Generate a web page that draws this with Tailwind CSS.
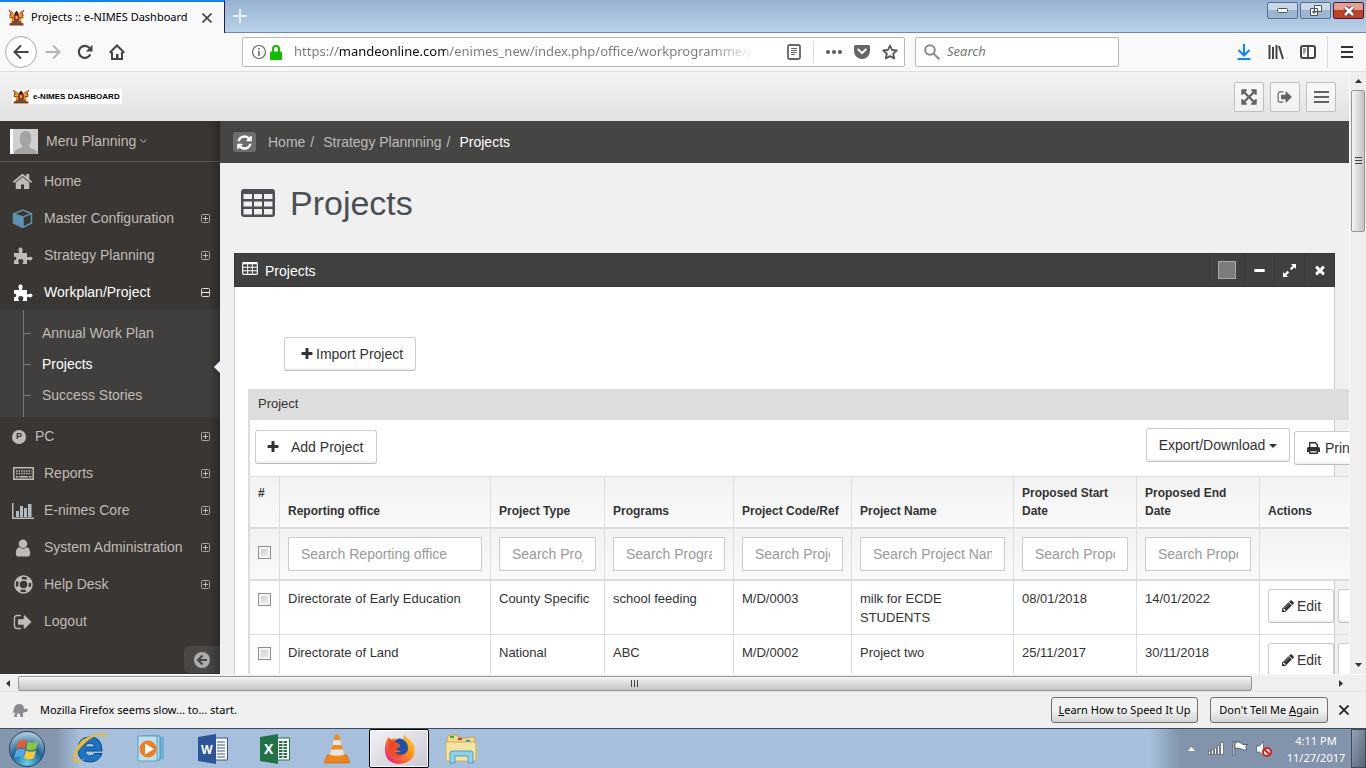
<!DOCTYPE html>
<html lang="en">
<head>
    <meta charset="UTF-8">
    <meta name="viewport" content="width=device-width, initial-scale=1.0">
    <title>Projects :: e-NIMES Dashboard</title>
    <script src="https://cdn.jsdelivr.net/npm/@tailwindcss/browser@4"></script>
</head>
<body class="h-screen overflow-hidden flex flex-col bg-[#f0f0f0] font-['Liberation_Sans',Arial,sans-serif] text-[13px] text-[#333]">

    <!-- Shared icons -->
    <svg class="hidden">
        <symbol id="i-home" viewBox="0 0 1792 1792"><path d="M1472 992v480q0 26-19 45t-45 19h-384v-384h-256v384h-384q-26 0-45-19t-19-45v-480q0-1 .5-3t.5-3l575-474 575 474q1 2 1 6zm223-69l-62 74q-8 9-21 11h-3q-13 0-21-7l-692-577-692 577q-12 8-24 7-13-2-21-11l-62-74q-8-10-7-23.5t11-21.5l719-599q32-26 76-26t76 26l244 204v-195q0-14 9-23t23-9h192q14 0 23 9t9 23v408l219 182q10 8 11 21.5t-7 23.5z"/></symbol>
        <symbol id="i-signout" viewBox="0 0 1792 1792"><path d="M704 1440q0 4 1 20t.5 26.5-3 23.5-10 19.5-20.5 6.5h-320q-119 0-203.5-84.5t-84.5-203.5v-704q0-119 84.5-203.5t203.5-84.5h320q13 0 22.5 9.5t9.5 22.5q0 4 1 20t.5 26.5-3 23.5-10 19.5-20.5 6.5h-320q-66 0-113 47t-47 113v704q0 66 47 113t113 47h312l11.5 1 11.5 3 8 5.5 7 9 2 13.5zm928-544q0 26-19 45l-544 544q-19 19-45 19t-45-19-19-45v-288h-448q-26 0-45-19t-19-45v-384q0-26 19-45t45-19h448v-288q0-26 19-45t45-19 45 19l544 544q19 19 19 45z"/></symbol>
        <symbol id="i-plus" viewBox="0 0 1792 1792"><path d="M1600 736v192q0 40-28 68t-68 28h-416v416q0 40-28 68t-68 28h-192q-40 0-68-28t-28-68v-416h-416q-40 0-68-28t-28-68v-192q0-40 28-68t68-28h416v-416q0-40 28-68t68-28h192q40 0 68 28t28 68v416h416q40 0 68 28t28 68z"/></symbol>
        <symbol id="i-pencil" viewBox="0 0 1792 1792"><path d="M491 1536l91-91-235-235-91 91v107h128v128h107zm523-928q0-22-22-22-10 0-17 7l-542 542q-7 7-7 17 0 22 22 22 10 0 17-7l542-542q7-7 7-17zm-54-192l416 416-832 832h-416v-416zm683 96q0 53-37 90l-166 166-416-416 166-165q36-38 90-38 53 0 91 38l235 234q37 39 37 91z"/></symbol>
        <symbol id="i-table" viewBox="0 0 34 28"><path fill-rule="evenodd" d="M3 0h28a3 3 0 0 1 3 3v22a3 3 0 0 1-3 3H3a3 3 0 0 1-3-3V3a3 3 0 0 1 3-3zM2.500 5v5H11V5zM13 5v5h8V5zM23 5v5h8.500V5zM2.500 12.500v5H11v-5zM13 12.500v5h8v-5zM23 12.500v5h8.500v-5zM2.500 20v5.500H11V20zM13 20v5.500h8V20zM23 20v5.500h8.500V20z"/></symbol>
        <symbol id="i-puzzle" viewBox="0 0 19 17"><path d="M0 6h4.500c.8 0 1-.6.6-1.300C4 3 4.300.5 6.500.5S9 3 8.200 4.700C7.800 5.500 8 6 9 6h4v3.500c0 .8.500 1 1.200.7 2-1 4.300-.5 4.300 1.300s-2.200 2.300-4.300 1.300c-.7-.3-1.200 0-1.200.7V17H8.800c-.6-1 .6-1.600.6-3 0-1.300-1.200-2-2.600-2s-2.600.7-2.600 2c0 1.400 1.200 2 .6 3H0v-4c.9.4 2.300 0 2.300-1.500S.9 9.500 0 10z"/></symbol>
        <symbol id="i-expand" viewBox="0 0 9 9"><rect x=".5" y=".5" width="8" height="8" rx="1" fill="none" stroke="#a9a4a0"/><path d="M2 4h5v1H2zM4 2h1v5H4z"/></symbol>
        <symbol id="i-emblem" viewBox="0 0 17 16"><path d="M2 4l3-2 2 3-1 4 1 3-4 1 1-4-3-1zM15 4l-3-2-2 3 1 4-1 3 4 1-1-4 3-1z" fill="#d8a928"/><path d="M1 0l2 3-1 3M16 0l-2 3 1 3M4 11l4 2M13 11l-4 2" fill="none" stroke="#b3302a" stroke-width="1.200"/><path d="M3 1l2 2M14 1l-2 2M2 7l3 1M15 7l-3 1" stroke="#5a4010" stroke-width=".8"/><path d="M8.500.5q6 7.500 0 14-6-6.500 0-14z" fill="#c01c1c"/><path d="M6.500 4.500Q8.500-2 10.500 4.500z" fill="#222"/><path d="M6.200 10.500q2.300 5 4.600 0z" fill="#2b6b2f"/><path d="M7.500 6h2v3h-2z" fill="#e9b9a8"/><path d="M1.500 13.500l4-1.500h6l4 1.500v2h-14z" fill="#8c3a22"/><path d="M5.500 12.500h6v1.500h-6z" fill="#3d6a30"/></symbol>
    </svg>

    <!-- Window title bar -->
    <div class="h-[33px] shrink-0 flex justify-between bg-linear-to-b from-[#98b3d1] to-[#b9d1ea] border-b border-[#7189a8] font-['Noto_Sans',sans-serif] text-black">
        <div class="flex">
            <div class="w-[225px] h-[33px] flex items-center bg-[#f9f9fa] border-t-2 border-[#0a84ff] border-r border-r-[#1c2340] px-2">
                <svg class="w-[17px] h-4 mr-[6px]"><use href="#i-emblem"/></svg>
                <span class="grow text-[11px] whitespace-nowrap">Projects :: e-NIMES Dashboard</span>
                <button class="p-1" aria-label="Close tab"><svg class="size-[10px]" viewBox="0 0 10 10" stroke="#444" stroke-width="1.600"><path d="M.5.5l9 9M9.500.5l-9 9"/></svg></button>
            </div>
            <button class="ml-2" aria-label="New tab"><svg class="size-[14px]" viewBox="0 0 14 14" stroke="#e8eff8" stroke-width="2"><path d="M7 0v14M0 7h14"/></svg></button>
        </div>
        <div class="flex gap-[2px] pt-[2px] pr-[2px]">
            <button class="w-[31px] h-[17px] grid place-items-center border border-[#56708f] rounded-xs bg-linear-to-b from-[#c8d8ea] from-50% to-[#9db6d2] to-50%" aria-label="Minimize"><svg width="11" height="5"><rect x=".5" y=".5" width="10" height="4" rx="1" fill="#fff" stroke="#4a5266"/></svg></button>
            <button class="w-[31px] h-[17px] grid place-items-center border border-[#56708f] rounded-xs bg-linear-to-b from-[#c8d8ea] from-50% to-[#9db6d2] to-50%" aria-label="Restore"><svg width="12" height="11" fill="#fff" stroke="#4a5266"><path d="M4.500.5h7v6h-7zM.5 3.500h7v7h-7z"/><path d="M3 6h2v2H3z" fill="#9db6d2"/></svg></button>
            <button class="w-[31px] h-[17px] grid place-items-center border border-[#52182a] rounded-xs bg-linear-to-b from-[#e3a092] from-50% to-[#bf4227] to-50%" aria-label="Close"><svg width="12" height="10" viewBox="0 0 12 10"><path d="M2 1l8 8M10 1l-8 8" stroke="#5c3a48" stroke-width="4.500"/><path d="M2 1l8 8M10 1l-8 8" stroke="#fff" stroke-width="2.500"/></svg></button>
        </div>
    </div>

    <!-- Navigation toolbar -->
    <div class="h-[39px] shrink-0 flex items-center bg-[#f9f9fa] border-b border-[#dedede] pl-[5px] pr-[13px] font-['Noto_Sans',sans-serif]">
        <button class="size-8 grid place-items-center rounded-full border border-[#aaa] bg-white" aria-label="Back"><svg class="size-4" viewBox="0 0 16 16" fill="none" stroke="#444" stroke-width="2"><path d="M15.500 8H2M8 1.500L1.500 8 8 14.500"/></svg></button>
        <button class="w-8 grid place-items-center" aria-label="Forward"><svg class="size-4" viewBox="0 0 16 16" fill="none" stroke="#b5b5b5" stroke-width="2"><path d="M.5 8H14M8 1.500L14.500 8 8 14.500"/></svg></button>
        <button class="w-8 grid place-items-center" aria-label="Reload"><svg class="size-4" viewBox="0 0 16 16"><path d="M13.300 10.500A6 6 0 1 1 12.500 4" fill="none" stroke="#444" stroke-width="2.200"/><path d="M15.500.8v6.700H8.800z" fill="#444"/></svg></button>
        <button class="w-8 grid place-items-center" aria-label="Home"><svg class="size-4" viewBox="0 0 16 16" fill="none" stroke="#444" stroke-width="2"><path d="M.7 8.700L8 1.500l7.300 7.200M3 8v7h10V8"/><path d="M7 10h2.500v5H7z" fill="#444" stroke="none"/></svg></button>
        <div class="ml-[109px] mr-[10px] grow h-[30px] flex items-center border border-[#b8b8b8] rounded-xs bg-white pl-2 pr-[6px]">
            <svg class="size-4 mr-[3px]" viewBox="0 0 16 16"><circle cx="8" cy="8" r="6.500" fill="none" stroke="#666" stroke-width="1.200"/><path d="M7.200 7h1.600v5H7.200zM7.200 4h1.600v1.600H7.200z" fill="#666"/></svg>
            <svg class="w-3 h-[15px] mr-3" viewBox="0 0 12 15"><path d="M3 7V4a3 3 0 0 1 6 0v3" fill="none" stroke="#12bc00" stroke-width="2"/><rect y="6.500" width="12" height="8.500" rx="1" fill="#12bc00"/></svg>
            <input aria-label="Address" value="https://mandeonline.com/enimes_new/index.php/office/workprogramme/projects" class="grow min-w-0 max-w-[457px] text-[13px] outline-none bg-clip-text text-transparent bg-[linear-gradient(90deg,#777_44px,#0c0c0d_44px,#0c0c0d_152px,#777_152px,#777_415px,transparent_460px)]">
            <div class="ml-auto flex items-center">
                <svg class="w-[14px] h-4 mr-3" viewBox="0 0 14 16" fill="none" stroke="#666"><rect x="1" y="1" width="12" height="14" rx="1.500" stroke-width="1.800"/><path d="M4 4.500h6M4 6.500h6M4 8.500h6M4 10.500h4"/></svg>
                <span class="w-px h-[22px] bg-[#ddd] mr-3"></span>
                <svg class="w-4 h-1 mr-3" viewBox="0 0 16 4" fill="#5a5a5a"><circle cx="2" cy="2" r="2"/><circle cx="8" cy="2" r="2"/><circle cx="14" cy="2" r="2"/></svg>
                <svg class="w-4 h-[14px] mr-3" viewBox="0 0 16 14"><path d="M1.500 0h13A1.500 1.500 0 0 1 16 1.500V6A8 8 0 0 1 0 6V1.500A1.500 1.500 0 0 1 1.500 0z" fill="#666"/><path d="M4.300 4.500L8 8.200l3.700-3.700" fill="none" stroke="#fff" stroke-width="2" stroke-linecap="round"/></svg>
                <svg class="size-4" viewBox="0 0 16 16"><path d="M8 1.500l2 4.500 4.800.5-3.600 3.200 1 4.800L8 12.100l-4.200 2.400 1-4.800L1.200 6.500 6 6z" fill="none" stroke="#555" stroke-width="1.800" stroke-linejoin="round"/></svg>
            </div>
        </div>
        <label class="w-[204px] h-[30px] flex items-center border border-[#b8b8b8] rounded-xs bg-white pl-2">
            <svg class="size-4 mr-[7px]" viewBox="0 0 16 16" fill="none" stroke="#888" stroke-width="2"><circle cx="6" cy="6" r="4.800"/><path d="M9.500 9.500l5.800 5.800"/></svg>
            <input aria-label="Search the web" placeholder="Search" class="w-36 text-[13px] italic outline-none placeholder:text-[#757575]">
        </label>
        <div class="ml-[117px] flex items-center">
            <svg class="size-4 mr-4" viewBox="0 0 16 16" fill="none" stroke="#0a84ff" stroke-width="2"><path d="M8 0v11M2.500 6L8 11.500 13.500 6M1.500 15h13"/></svg>
            <svg class="size-4 mr-4" viewBox="0 0 16 16" stroke="#444" stroke-width="2"><path d="M1.500 1v14M5 3v12M8.500 1v14M11 2l4 13" fill="none"/></svg>
            <svg class="size-4 mr-[11px]" viewBox="0 0 16 16" fill="none" stroke="#444"><rect x="1" y="2" width="14" height="12" rx="2" stroke-width="2"/><path d="M8 2v12" stroke-width="1.800"/><path d="M3 5h3M3 7h3M3 9h2"/></svg>
            <span class="w-px h-8 bg-[#ddd] mr-[13px]"></span>
            <button aria-label="Open menu"><svg class="w-3 h-[14px]" viewBox="0 0 12 14" stroke="#333" stroke-width="2"><path d="M0 2h12M0 7h12M0 12h12"/></svg></button>
        </div>
    </div>

    <!-- Page with its scroll bars -->
    <div class="grow min-h-0 flex">
        <div class="grow min-w-0 flex flex-col overflow-hidden">

            <header class="h-[49px] shrink-0 flex items-center justify-between bg-linear-to-b from-[#f3f3f3] to-[#e2e2e2] pl-3 pr-[13px]">
                <a href="#" class="w-[110px] h-[15px] flex items-center gap-[3px] bg-white text-black">
                    <svg class="w-[18px] h-[14px]" viewBox="0 0 17 16" preserveAspectRatio="none"><use href="#i-emblem" width="17" height="16"/></svg>
                    <span class="font-bold text-[8px] whitespace-nowrap">e-NIMES DASHBOARD</span>
                </a>
                <div class="flex gap-[6px] fill-[#636363]">
                    <button class="size-[30px] grid place-items-center border border-[#bfbfbf] rounded-xs bg-linear-to-b from-[#f8f8f8] to-[#f1f1f1]" aria-label="Full screen"><svg class="size-[18px]" viewBox="0 0 1792 1792"><path d="M1411 541l-355 355 355 355 144-144q29-31 70-14 39 17 39 59v448q0 26-19 45t-45 19h-448q-42 0-59-40-17-39 14-69l144-144-355-355-355 355 144 144q31 30 14 69-17 40-59 40h-448q-26 0-45-19t-19-45v-448q0-42 40-59 39-17 69 14l144 144 355-355-355-355-144 144q-19 19-45 19-12 0-24-5-40-17-40-59v-448q0-26 19-45t45-19h448q42 0 59 40 17 39-14 69l-144 144 355 355 355-355-144-144q-31-30-14-69 17-40 59-40h448q26 0 45 19t19 45v448q0 42-39 59-13 5-25 5-26 0-45-19z"/></svg></button>
                    <button class="size-[30px] grid place-items-center border border-[#bfbfbf] rounded-xs bg-linear-to-b from-[#f8f8f8] to-[#f1f1f1]" aria-label="Sign out"><svg class="size-[16px]"><use href="#i-signout"/></svg></button>
                    <button class="size-[30px] grid place-items-center border border-[#bfbfbf] rounded-xs bg-linear-to-b from-[#f8f8f8] to-[#f1f1f1]" aria-label="Toggle menu"><svg class="w-[15px] h-3" viewBox="0 0 15 12"><path d="M0 0h15v2H0zM0 5h15v2H0zM0 10h15v2H0z"/></svg></button>
                </div>
            </header>

            <div class="grow min-h-0 flex">

                <!-- Sidebar -->
                <aside class="relative w-[220px] shrink-0 flex flex-col bg-[#3a3633] text-[14px] text-[#c0bbb7] fill-[#c0bbb7]">
                    <a href="#" class="h-[41px] shrink-0 flex items-center pl-[10px] border-b border-[#5b5856]">
                        <svg class="w-7 h-[25px] mr-2" viewBox="0 0 28 25"><path d="M0 0h28v25H0z" fill="#d0d0d0"/><path d="M0 0h3v25H0z" fill="#fff"/><path d="M4 25q0-4 4-5 4-1 4-3-3-4-2-10 1-5 5.500-5t5.500 5q1 6-2 10 0 2 4 3 4 1 4 5z" fill="#a4a4a4"/></svg>
                        Meru Planning
                        <svg class="w-[7px] h-1 ml-1" viewBox="0 0 7 4" fill="none" stroke="#c0bbb7"><path d="M.5.5l3 3 3-3"/></svg>
                    </a>
                    <nav class="[&>a]:pt-[2px]">
                        <a href="#" class="h-[37px] flex items-center pl-3 pr-[10px]"><svg class="size-[21px] mr-[11px]"><use href="#i-home"/></svg>Home</a>
                        <a href="#" class="h-[37px] flex items-center pl-3 pr-[10px]"><svg class="w-[21px] h-[19px] mr-[11px]" viewBox="0 0 21 19"><path d="M1.500 5L11 8v10.500L1.500 14z" fill="#5b93ad"/><path d="M1.500 5L11 1l8.500 3.500V14L11 18.500 1.500 14zM11 8v10.500M1.500 5L11 8l8.500-3.500" fill="none" stroke="#5b93ad" stroke-width="1.500"/></svg><span class="grow">Master Configuration</span><svg class="size-[9px]"><use href="#i-expand"/></svg></a>
                        <a href="#" class="h-[37px] flex items-center pl-[14px] pr-[10px]"><svg class="w-[19px] h-[17px] mr-[11px]"><use href="#i-puzzle"/></svg><span class="grow">Strategy Planning</span><svg class="size-[9px]"><use href="#i-expand"/></svg></a>
                        <a href="#" class="h-[37px] flex items-center pl-[14px] pr-[10px] text-white fill-white"><svg class="w-[19px] h-[17px] mr-[11px]"><use href="#i-puzzle"/></svg><span class="grow">Workplan/Project</span><svg class="size-[9px]" viewBox="0 0 9 9"><rect x=".5" y=".5" width="8" height="8" rx="1" fill="none" stroke="#ddd"/><path d="M1 4h7v1H1z"/></svg></a>
                        <div class="bg-[#403f3d] pl-[23px]">
                            <ul class="border-l border-[#7b7977] pt-2 pb-[6px]">
                                <li class="h-[31px] flex items-center"><span class="w-[7px] h-px mr-[11px] bg-[#7b7977]"></span><a href="#">Annual Work Plan</a></li>
                                <li class="relative h-[31px] flex items-center"><span class="w-[7px] h-px mr-[11px] bg-[#7b7977]"></span><a href="#" class="text-white">Projects</a><svg class="absolute right-0 top-[12px] z-10 w-[6px] h-[12px]" viewBox="0 0 6 12"><path d="M6 0v12L0 6z" fill="#f0f4fa"/></svg></li>
                                <li class="h-[31px] flex items-center"><span class="w-[7px] h-px mr-[11px] bg-[#7b7977]"></span><a href="#">Success Stories</a></li>
                            </ul>
                        </div>
                        <a href="#" class="h-[37px] flex items-center pl-3 pr-[10px]"><span class="size-[14px] mr-[9px] rounded-full bg-[#c0bbb7] text-[#3a3633] text-[9px] font-bold grid place-items-center">P</span><span class="grow">PC</span><svg class="size-[9px]"><use href="#i-expand"/></svg></a>
                        <a href="#" class="h-[37px] flex items-center pl-[13px] pr-[10px]"><svg class="w-[21px] h-[13px] mr-[10px]" viewBox="0 0 21 13"><path d="M.8.8h19.400v11.400H.8z" fill="none" stroke="#c0bbb7" stroke-width="1.500"/><path d="M3 4h15.500M3 6.500h15.500" fill="none" stroke="#c0bbb7" stroke-width="1.500" stroke-dasharray="1.500 1"/><path d="M3 9h2v1.500H3zM6 9h9v1.500H6zM16 9h2.500v1.500H16z"/></svg><span class="grow">Reports</span><svg class="size-[9px]"><use href="#i-expand"/></svg></a>
                        <a href="#" class="h-[37px] flex items-center pl-3 pr-[10px]"><svg class="w-[22px] h-4 mr-[10px]" viewBox="0 0 22 16"><path d="M0 0h1.500v14.500H22V16H0z"/><g fill="#b3bcc3"><path d="M4 8h3v6H4zM8 3h3v11H8zM12 5h3v9h-3zM16 1h3.500v13H16z"/></g></svg><span class="grow">E-nimes Core</span><svg class="size-[9px]"><use href="#i-expand"/></svg></a>
                        <a href="#" class="h-[37px] flex items-center pl-[13px] pr-[10px]"><svg class="size-[20px] mr-[11px]" viewBox="0 0 1792 1792"><path d="M1536 1399q0 109-62.500 187t-150.500 78h-854q-88 0-150.500-78t-62.500-187q0-85 8.500-160.500t31.500-152 58.500-131 94-89 134.500-34.500q131 128 313 128t313-128q76 0 134.500 34.500t94 89 58.500 131 31.500 152 8.500 160.500zm-256-887q0 159-112.500 271.500t-271.500 112.500-271.500-112.500-112.500-271.500 112.500-271.500 271.500-112.500 271.500 112.500 112.500 271.500z"/></svg><span class="grow">System Administration</span><svg class="size-[9px]"><use href="#i-expand"/></svg></a>
                        <a href="#" class="h-[37px] flex items-center pl-[14px] pr-[10px]"><svg class="size-[19px] mr-[11px]" viewBox="0 0 19 19" fill="none"><circle cx="9.500" cy="9.500" r="8.500" stroke="#c0bbb7" stroke-width="1.500"/><circle cx="9.500" cy="9.500" r="4.500" stroke="#c0bbb7" stroke-width="1.500"/><circle cx="9.500" cy="9.500" r="6.500" stroke="#c0bbb7" stroke-width="4.500" stroke-dasharray="5.100 5.110" stroke-dashoffset="-2.550"/></svg><span class="grow">Help Desk</span><svg class="size-[9px]"><use href="#i-expand"/></svg></a>
                        <a href="#" class="h-[37px] flex items-center pl-[13px] pr-[10px]"><svg class="size-[20px] mr-[11px]"><use href="#i-signout"/></svg>Logout</a>
                    </nav>
                    <button class="mt-[7px] ml-auto w-9 h-[27px] shrink-0 flex items-center pl-[10px] rounded-l-[5px] bg-[#494847]" aria-label="Collapse sidebar"><svg class="size-4" viewBox="0 0 16 16"><circle cx="8" cy="8" r="8" fill="#b0acaa"/><path d="M13 8H5M8.500 3.500L4 8l4.500 4.500" fill="none" stroke="#494847" stroke-width="2.200"/></svg></button>
                    <div class="absolute inset-y-0 right-0 w-3 bg-linear-to-l from-black/25 to-transparent pointer-events-none"></div>
                </aside>

                <main class="grow min-w-0 flex flex-col bg-[#f0f0f0]">
                    <!-- Breadcrumb -->
                    <div class="h-[42px] shrink-0 flex items-center pl-[13px] bg-[#474544] text-[14px] text-[#bbb]">
                        <button class="w-[23px] h-5 mr-3 grid place-items-center rounded-[3px] bg-[#6e6d6c]" aria-label="Refresh"><svg class="size-[17px] fill-white" viewBox="0 0 1792 1792"><path d="M1639 1056q0 5-1 7-64 268-268 434.500t-478 166.500q-146 0-282.500-55t-243.500-157l-129 129q-19 19-45 19t-45-19-19-45v-448q0-26 19-45t45-19h448q26 0 45 19t19 45-19 45l-137 137q71 66 161 102t187 36q134 0 250-65t186-179q11-17 53-117 8-23 30-23h192q13 0 22.500 9.500t9.500 22.500zm25-800v448q0 26-19 45t-45 19h-448q-26 0-45-19t-19-45 19-45l138-138q-148-137-349-137-134 0-250 65t-186 179q-11 17-53 117-8 23-30 23h-199q-13 0-22.500-9.500t-9.500-22.500v-7q65-268 270-434.500t480-166.500q146 0 284 55.500t245 156.500l130-129q19-19 45-19t45 19 19 45z"/></svg></button>
                        <a href="#">Home</a><span class="ml-[5px] mr-[9px]">/</span>
                        <a href="#">Strategy Plannning</a><span class="ml-[5px] mr-[9px]">/</span>
                        <span class="text-white">Projects</span>
                    </div>

                    <div class="grow min-h-0 flex flex-col px-[14px] pt-4">
                        <h1 class="flex items-center pl-[7px] h-12 mb-[26px] text-[34px] text-[#4b4f54]">
                            <svg class="w-[34px] h-7 mr-[15px] fill-[#4b4f54]"><use href="#i-table"/></svg>Projects
                        </h1>

                        <section class="grow min-h-0 flex flex-col">
                            <div class="h-[34px] shrink-0 flex items-center bg-[#404040] border border-[#373737] text-[14px] text-white">
                                <svg class="w-4 h-[13px] ml-[7px] mr-[7px] mb-1 fill-white"><use href="#i-table"/></svg>
                                <h2 class="grow pt-[2px]">Projects</h2>
                                <button class="w-[35px] h-full grid place-items-center border-l border-[#393939]" aria-label="Panel colour"><span class="size-[18px] bg-[#7c7c7c] border border-[#aaa]"></span></button>
                                <button class="w-[30px] h-full grid place-items-center border-l border-[#393939]" aria-label="Minimise panel"><span class="w-[11px] h-[3px] rounded-xs bg-white"></span></button>
                                <button class="w-[30px] h-full grid place-items-center border-l border-[#393939]" aria-label="Expand panel"><svg class="size-[13px] fill-white" viewBox="0 0 13 13"><path d="M8 0h5v5l-1.700-1.700-2.800 2.900-1.700-1.700L9.700 1.700zM5 13H0V8l1.700 1.700 2.800-2.900 1.700 1.700-2.900 2.800z"/></svg></button>
                                <button class="w-[30px] h-full grid place-items-center border-l border-[#393939]" aria-label="Close panel"><svg class="size-[14px] fill-white" viewBox="0 0 1792 1792"><path d="M1490 1322q0 40-28 68l-136 136q-28 28-68 28t-68-28l-294-294-294 294q-28 28-68 28t-68-28l-136-136q-28-28-28-68t28-68l294-294-294-294q-28-28-28-68t28-68l136-136q28-28 68-28t68 28l294 294 294-294q28-28 68-28t68 28l136 136q28 28 28 68t-28 68l-294 294 294 294q28 28 28 68z"/></svg></button>
                            </div>

                            <div class="grow bg-white border-x border-[#ccc] pl-[13px] pt-[50px]">
                                <button class="ml-9 mb-[18px] w-[132px] h-[34px] flex items-center pl-[15px] gap-[2px] border border-[#ccc] border-b-[#bbb] rounded-[3px] bg-white shadow-[inset_0_-2px_0_rgba(0,0,0,0.05)] text-[14px]"><svg class="size-[14px] fill-[#333]"><use href="#i-plus"/></svg>Import Project</button>

                                <!-- The grid is wider than its panel and runs past the edge -->
                                <div class="w-[1220px] border-l-2 border-[#ddd]">
                                    <h3 class="h-[31px] flex items-center bg-[#ddd] pl-2 pb-[2px]">Project</h3>
                                    <div class="h-14 flex items-start pl-[5px] pt-2 text-[14px]">
                                        <button class="mt-[2px] w-[122px] h-[34px] flex items-center pl-[10px] gap-[11px] border border-[#ccc] border-b-[#bbb] rounded-[3px] bg-white shadow-[inset_0_-2px_0_rgba(0,0,0,0.05)]"><svg class="size-[14px] fill-[#333]"><use href="#i-plus"/></svg>Add Project</button>
                                        <button class="ml-[769px] w-36 h-[34px] flex items-center justify-center gap-1 border border-[#ccc] border-b-[#bbb] rounded-[3px] bg-white shadow-[inset_0_-2px_0_rgba(0,0,0,0.05)]">Export/Download<svg class="w-2 h-1 mt-[2px]" viewBox="0 0 8 4"><path d="M0 0h8L4 4z" fill="#333"/></svg></button>
                                        <button class="ml-1 mt-[3px] w-[76px] h-[34px] flex items-center pl-3 gap-[5px] border border-[#ccc] border-b-[#bbb] rounded-[3px] bg-white shadow-[inset_0_-2px_0_rgba(0,0,0,0.05)]"><svg class="w-[13px] h-3" viewBox="0 0 13 12"><path d="M2.700 6V.7h5.600l2 2V6" fill="none" stroke="#333" stroke-width="1.400"/><path d="M1.500 5h10A1.500 1.500 0 0 1 13 6.500V10h-2V8H2v2H0V6.500A1.500 1.500 0 0 1 1.500 5z" fill="#333"/><path d="M2.700 8.500h7.600v2.800H2.700z" fill="#fff" stroke="#333" stroke-width="1.400"/></svg>Print</button>
                                    </div>

                                    <table class="w-full table-fixed border-separate border-spacing-0">
                                        <colgroup><col class="w-[30px]"><col class="w-[211px]"><col class="w-[114px]"><col class="w-[129px]"><col class="w-[118px]"><col class="w-[162px]"><col class="w-[123px]"><col class="w-[123px]"><col></colgroup>
                                        <thead class="text-[12px] leading-[18px] text-left">
                                            <tr class="h-[53px] align-bottom bg-linear-to-b from-[#f2f2f2] to-[#fafafa] [&>th]:border-t [&>th]:border-b-2 [&>th]:border-r [&>th]:border-[#ddd] [&>th]:px-2 [&>th]:py-[7px]">
                                                <th class="align-top">#</th>
                                                <th>Reporting office</th>
                                                <th>Project Type</th>
                                                <th>Programs</th>
                                                <th>Project Code/Ref</th>
                                                <th>Project Name</th>
                                                <th>Proposed Start Date</th>
                                                <th>Proposed End Date</th>
                                                <th>Actions</th>
                                            </tr>
                                            <tr class="h-[52px] bg-linear-to-b from-[#f2f2f2] to-[#fafafa] [&>td]:border-b-2 [&>td]:border-r [&>td]:border-[#ddd] [&>td]:px-2">
                                                <td class="pb-1"><input type="checkbox" aria-label="Select all" class="block size-[13px] appearance-none border border-[#8e8f8f] bg-linear-to-br from-[#c3c7cd] to-[#f6f6f6] shadow-[inset_0_0_0_2px_#f4f4f4]"></td>
                                                <td><input aria-label="Search Reporting office" placeholder="Search Reporting office" class="block w-full h-[34px] px-3 bg-white border border-[#ccc] text-[14px] placeholder:text-[#999]"></td>
                                                <td><input aria-label="Search Project Type" placeholder="Search Project Type" class="block w-full h-[34px] px-3 bg-white border border-[#ccc] text-[14px] placeholder:text-[#999]"></td>
                                                <td><input aria-label="Search Programs" placeholder="Search Programs" class="block w-full h-[34px] px-3 bg-white border border-[#ccc] text-[14px] placeholder:text-[#999]"></td>
                                                <td><input aria-label="Search Project Code/Ref" placeholder="Search Project Code/Ref" class="block w-full h-[34px] px-3 bg-white border border-[#ccc] text-[14px] placeholder:text-[#999]"></td>
                                                <td><input aria-label="Search Project Name" placeholder="Search Project Name" class="block w-full h-[34px] px-3 bg-white border border-[#ccc] text-[14px] placeholder:text-[#999]"></td>
                                                <td><input aria-label="Search Proposed Start Date" placeholder="Search Proposed Start Date" class="block w-full h-[34px] px-3 bg-white border border-[#ccc] text-[14px] placeholder:text-[#999]"></td>
                                                <td><input aria-label="Search Proposed End Date" placeholder="Search Proposed End Date" class="block w-full h-[34px] px-3 bg-white border border-[#ccc] text-[14px] placeholder:text-[#999]"></td>
                                                <td></td>
                                            </tr>
                                        </thead>
                                        <tbody class="leading-[19px] align-top">
                                            <tr class="h-[54px] [&>td]:border-b [&>td]:border-r [&>td]:border-[#ddd] [&>td]:px-2 [&>td]:pt-2">
                                                <td><input type="checkbox" aria-label="Select row 1" class="block mt-1 size-[13px] appearance-none border border-[#8e8f8f] bg-linear-to-br from-[#c3c7cd] to-[#f6f6f6] shadow-[inset_0_0_0_2px_#f4f4f4]"></td>
                                                <td>Directorate of Early Education</td>
                                                <td class="whitespace-nowrap">County Specific</td>
                                                <td>school feeding</td>
                                                <td>M/D/0003</td>
                                                <td>milk for ECDE<br>STUDENTS</td>
                                                <td>08/01/2018</td>
                                                <td>14/01/2022</td>
                                                <td><div class="flex gap-1">
                                                    <button class="w-[66px] h-[34px] flex items-center justify-center gap-[2px] border border-[#ccc] border-b-[#bbb] rounded-[3px] bg-white shadow-[inset_0_-2px_0_rgba(0,0,0,0.05)] text-[14px]"><svg class="size-[14px] fill-[#333]"><use href="#i-pencil"/></svg>Edit</button>
                                                    <button class="w-[66px] h-[34px] border border-[#ccc] border-b-[#bbb] rounded-[3px] bg-white shadow-[inset_0_-2px_0_rgba(0,0,0,0.05)]" aria-label="More"></button>
                                                </div></td>
                                            </tr>
                                            <tr class="h-[54px] [&>td]:border-b [&>td]:border-r [&>td]:border-[#ddd] [&>td]:px-2 [&>td]:pt-2">
                                                <td><input type="checkbox" aria-label="Select row 2" class="block mt-1 size-[13px] appearance-none border border-[#8e8f8f] bg-linear-to-br from-[#c3c7cd] to-[#f6f6f6] shadow-[inset_0_0_0_2px_#f4f4f4]"></td>
                                                <td>Directorate of Land</td>
                                                <td>National</td>
                                                <td>ABC</td>
                                                <td>M/D/0002</td>
                                                <td>Project two</td>
                                                <td>25/11/2017</td>
                                                <td>30/11/2018</td>
                                                <td><div class="flex gap-1">
                                                    <button class="w-[66px] h-[34px] flex items-center justify-center gap-[2px] border border-[#ccc] border-b-[#bbb] rounded-[3px] bg-white shadow-[inset_0_-2px_0_rgba(0,0,0,0.05)] text-[14px]"><svg class="size-[14px] fill-[#333]"><use href="#i-pencil"/></svg>Edit</button>
                                                    <button class="w-[66px] h-[34px] border border-[#ccc] border-b-[#bbb] rounded-[3px] bg-white shadow-[inset_0_-2px_0_rgba(0,0,0,0.05)]" aria-label="More"></button>
                                                </div></td>
                                            </tr>
                                        </tbody>
                                    </table>
                                </div>
                            </div>
                        </section>
                    </div>
                </main>
            </div>
        </div>

        <!-- Vertical scroll bar -->
        <div class="w-[17px] shrink-0 flex flex-col items-center bg-[#efefef] border-l border-[#f8f8f8]">
            <svg class="w-[7px] h-1 my-[7px] shrink-0" viewBox="0 0 7 4"><path d="M0 4h7L3.500 0z" fill="#333"/></svg>
            <div class="w-[14px] h-[142px] grid place-items-center border border-[#979797] rounded-xs bg-linear-to-r from-[#f5f5f5] to-[#c4c4c8]"><svg class="w-[7px] h-2" viewBox="0 0 7 8"><path d="M0 0h7v1H0zM0 3h7v1H0zM0 6h7v1H0z" fill="#444"/></svg></div>
            <svg class="w-[7px] h-1 mt-auto mb-[7px] shrink-0" viewBox="0 0 7 4"><path d="M0 0h7L3.500 4z" fill="#333"/></svg>
        </div>
    </div>

    <!-- Horizontal scroll bar -->
    <div class="h-[17px] shrink-0 flex items-center bg-[#efefef] border-t border-[#f8f8f8] pl-[6px] pr-[23px]">
        <svg class="w-1 h-[7px] mr-2" viewBox="0 0 4 7"><path d="M4 0v7L0 3.500z" fill="#333"/></svg>
        <div class="grow h-[15px] mr-[87px] grid place-items-center border border-[#979797] rounded-xs bg-linear-to-b from-[#f5f5f5] to-[#c4c4c8]"><svg class="w-2 h-[7px]" viewBox="0 0 8 7"><path d="M0 0h1v7H0zM3 0h1v7H3zM6 0h1v7H6z" fill="#444"/></svg></div>
        <svg class="w-1 h-[7px]" viewBox="0 0 4 7"><path d="M0 0v7l4-3.500z" fill="#333"/></svg>
    </div>

    <!-- Notification bar -->
    <div class="h-[37px] shrink-0 flex items-center bg-[#f0f0f0] border-t border-[#e4e4e4] pl-3 pr-[17px] font-['Noto_Sans',sans-serif] text-[11px] text-black">
        <svg class="w-4 h-[13px] mr-3" viewBox="0 0 16 13"><path d="M1.500 7Q2 0 7 0t5 5q3-1.500 4 1-.5 2.500-3 2L11 9v4H8.500l-.5-2.500L6 9l-1 1.500V13H2l1-4.500H0z" fill="#8b8b8f"/></svg>
        <span class="grow">Mozilla Firefox seems slow... to... start.</span>
        <button class="w-[147px] h-[26px] mr-3 border border-[#707070] rounded-[3px] bg-linear-to-b from-[#f2f2f2] from-50% to-[#d4d4d4] whitespace-nowrap"><u>L</u>earn How to Speed It Up</button>
        <button class="w-[118px] h-[26px] mr-[11px] border border-[#707070] rounded-[3px] bg-linear-to-b from-[#f2f2f2] from-50% to-[#d4d4d4] whitespace-nowrap">Don't Tell Me <u>A</u>gain</button>
        <button aria-label="Dismiss"><svg class="size-[10px]" viewBox="0 0 10 10" stroke="#222" stroke-width="1.800"><path d="M.5.5l9 9M9.500.5l-9 9"/></svg></button>
    </div>

    <!-- Taskbar -->
    <div class="h-10 shrink-0 flex items-center border-t border-[#3c4a5c] bg-[linear-gradient(90deg,#8496ad_0,#8496ad_56px,#a6bfdc_80px,#a6bfdc_calc(100%-216px),#8294ab_calc(100%-186px))]">
        <svg class="ml-2 w-[38px] h-[38px] shrink-0" viewBox="0 0 38 38">
            <defs><radialGradient id="orb" cx=".5" cy=".9" r=".9"><stop offset="0" stop-color="#5fd0ee"/><stop offset=".5" stop-color="#1e6597"/><stop offset="1" stop-color="#bcd3e2"/></radialGradient></defs>
            <circle cx="19" cy="19" r="17.500" fill="url(#orb)" stroke="#24435f"/>
            <path d="M10 12q4.500-3 9-1l-2 7.500q-4.500-2-9 1z" fill="#e8592b"/><path d="M20 11.500q5 2.500 10 0l-2 7.500q-5 2.500-10 0z" fill="#8cc63e"/><path d="M8 20.500q4.500-3 9-1L15 27q-4.500-2-9 1z" fill="#55a8e8"/><path d="M18 20.500q5 2.500 10 0L26 28q-5 2.500-10 0z" fill="#fdc92c"/>
        </svg>
        <svg class="ml-[26px] w-9 h-8 shrink-0" viewBox="0 0 36 32"><path fill-rule="evenodd" d="M18 4q12 0 12 14H13q1 5 5 5 3 0 4.500-2.500H30Q27 29 18 29 6 29 6 16.500T18 4zm-5 10h10q-.5-4-5-4t-5 4z" fill="#1b74c5" stroke="#0d4a8a"/><path d="M10 7Q1 18 1.500 27q2 6 12-2Q4 30 4 25q0-7 9-15T29 2q5-1 4 5 4-7-3-7Q21 1 10 7z" fill="#f2bb27"/></svg>
        <svg class="ml-[29px] w-[30px] h-7 shrink-0" viewBox="0 0 30 28"><path d="M8 2h19v22H8z" fill="#6fb1d3"/><path d="M5 1h18v24H5z" fill="#a4d5ea" stroke="#4e93b8"/><path d="M1 1h19v25H1z" fill="#bde1f0" stroke="#5da0c2"/><circle cx="11" cy="14" r="8.500" fill="#f07c1d"/><path d="M8 8.500v11l9-5.500z" fill="#fff"/></svg>
        <svg class="ml-[31px] w-[30px] h-[30px] shrink-0" viewBox="0 0 30 30"><path d="M16 4h13.500v22H16z" fill="#fff" stroke="#2b579a"/><path d="M19 8h8M19 11h8M19 14h8M19 17h8M19 20h8M19 23h8" stroke="#2b579a"/><path d="M0 3l18-3v30L0 27z" fill="#2b579a"/><text x="3" y="20" font-size="12" font-weight="bold" fill="#fff" font-family="Open Sans, sans-serif">W</text></svg>
        <svg class="ml-8 w-[30px] h-[30px] shrink-0" viewBox="0 0 30 30"><path d="M16 4h13.500v22H16z" fill="#fff" stroke="#217346"/><path d="M19 8h8M19 11h8M19 14h8M19 17h8M19 20h8M19 23h8" stroke="#217346" stroke-width="2" stroke-dasharray="3.500 1"/><path d="M0 3l18-3v30L0 27z" fill="#217346"/><text x="4" y="20" font-size="14" font-weight="bold" fill="#fff" font-family="Open Sans, sans-serif">X</text></svg>
        <svg class="ml-[34px] w-[26px] h-[30px] shrink-0" viewBox="0 0 26 30"><path d="M3 21h20l3 8H0z" fill="#f08313" stroke="#c75f06" stroke-width=".5"/><path d="M11 1q2-1.500 4 0l6 23q-8 3.500-16 0z" fill="#f28a1c"/><path d="M9.800 6h6.400l1.300 5h-9zM7.200 15.500h11.600l1.300 5.200q-7 2.300-14.200 0z" fill="#e6e6e6"/></svg>
        <button class="ml-[19px] w-[60px] h-[39px] shrink-0 grid place-items-center border border-black rounded-xs bg-linear-to-br from-[#f2f2f7] to-[#c9c8d4] shadow-[inset_0_0_0_1px_#fff]" aria-label="Firefox">
            <svg class="size-[31px]" viewBox="0 0 31 31"><defs><linearGradient id="fox" x1="1" y1="0" x2="0" y2="1"><stop offset="0" stop-color="#ffe226"/><stop offset=".45" stop-color="#ff8a16"/><stop offset="1" stop-color="#e31587"/></linearGradient></defs><path d="M20 0q1 4 5 6 6 5 5.500 13-2 11-15 12Q2 30.500 1 18 .5 9 5 3.500q0 2 1 3.500 3-2 6-2l-1 5h5q5-5 4-10z" fill="url(#fox)"/><path d="M10 9q3-5 8-3 6 3 6 9t-7 7q-5 0-6-3 4 1 6-1-5 0-7-3l6-1-1-3z" fill="#1b4fae"/><path d="M5 5q2 3 5 3l6 4-3 4q-4 0-2 4 3 3 8 1-3 5-9 3Q3 20 5 5z" fill="#ef4a20"/></svg>
        </button>
        <svg class="ml-4 w-8 h-[30px] shrink-0" viewBox="0 0 32 30"><path d="M2 4l2-3h8l2 3h10l1-1h5v22H2z" fill="#f0d98a" stroke="#c2a04a"/><path d="M5 2h4v2H5z" fill="#2fae3c"/><path d="M13 4h4v2h-4z" fill="#d33"/><path d="M21 6h4v2h-4z" fill="#2f83d6"/><path d="M1 8h28q2 0 2 2v15q0 2-2 2H3q-2 0-2-2z" fill="#f6e3a0" stroke="#cdb05c"/><path d="M5 29V19q0-2 2-2h19q2 0 2 2v10h-5v-7H10v7z" fill="#8cd2ea" stroke="#4ca1c4"/></svg>

        <div class="ml-auto h-full flex items-center text-white font-['Noto_Sans',sans-serif] text-[11px] leading-[17px]">
            <svg class="w-[7px] h-1 mr-[13px]" viewBox="0 0 7 4"><path d="M0 4h7L3.500 0z" fill="#fff"/></svg>
            <svg class="w-4 h-[13px] mr-2" viewBox="0 0 16 13" fill="#fff" stroke="#4a5564" stroke-width=".7"><path d="M.5 9h2v3.500h-2zM3.500 7.500h2v5h-2zM6.500 5.500h2v7h-2zM9.500 3.500h2v9h-2zM12.500.5h3v12h-3z"/></svg>
            <svg class="w-4 h-[15px] mr-2" viewBox="0 0 16 15" fill="#fff" stroke="#3d4857" stroke-width=".8"><path d="M1 .5h1.800V15H1z"/><path d="M3 1.500q3-1 5 0t3 2h4.500l-2 2.500L15 8.500q-3 1-5 0L8 7.500q-2-1-5 0z"/></svg>
            <svg class="w-4 h-4 mr-[14px]" viewBox="0 0 16 16"><path d="M.5 5h3l4-4.500v14L3.500 11h-3z" fill="#fff" stroke="#4a5564" stroke-width=".7"/><circle cx="11" cy="11" r="4" fill="#fff" stroke="#d91f1f" stroke-width="2"/><path d="M8 8l6 6" stroke="#d91f1f" stroke-width="2"/></svg>
            <div class="text-center w-[60px] mr-[5px]">4:11 PM<br>11/27/2017</div>
            <button class="w-[15px] h-full border border-[#3e4a5a] bg-linear-to-br from-[#93a2b5] to-[#566577]" aria-label="Show desktop"></button>
        </div>
    </div>

</body>
</html>
